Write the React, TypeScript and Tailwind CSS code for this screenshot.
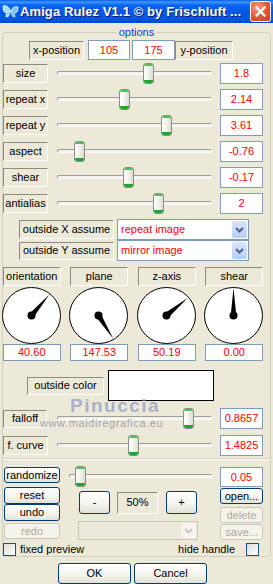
import clsx from "clsx";
import type { ReactNode } from "react";

const sunken =
  "flex shrink-0 items-center justify-center border border-t-[#8c8b83] border-l-[#8c8b83] border-b-white border-r-white";
const field =
  "flex shrink-0 items-center justify-center border border-[#7f9db9] bg-white text-[#ff0000]";
const xpButton =
  "flex shrink-0 items-center justify-center rounded-[3px] border border-[#003c74] bg-[linear-gradient(to_bottom,#ffffff,#f4f4f0_55%,#e4e1d5)] text-black";
const xpButtonOff =
  "flex shrink-0 items-center justify-center rounded-[3px] border border-[#c9c7ba] bg-[#f5f4ea] text-[#aca899]";

type SliderRow = { label: string; thumb: number; value: string };

const rows: SliderRow[] = [
  { label: "size", thumb: 93, value: "1.8" },
  { label: "repeat x", thumb: 69, value: "2.14" },
  { label: "repeat y", thumb: 111, value: "3.61" },
  { label: "aspect", thumb: 24, value: "-0.76" },
  { label: "shear", thumb: 73, value: "-0.17" },
  { label: "antialias", thumb: 103, value: "2" },
];

const dials = [
  { label: "orientation", angle: 40.6, value: "40.60" },
  { label: "plane", angle: 147.53, value: "147.53" },
  { label: "z-axis", angle: 50.19, value: "50.19" },
  { label: "shear", angle: 0, value: "0.00" },
];

function Slider({ thumb, className }: { thumb: number; className?: string }) {
  return (
    <div className={clsx("relative h-[21px] shrink-0", className)}>
      <div className="absolute top-[8px] right-[5px] left-[7px] h-[4px] rounded-[2px] border border-t-[#9d9c97] border-l-[#9d9c97] border-b-white border-r-white bg-[#f3f2ec]" />
      <div
        className="absolute top-0 h-[21px] w-[11px] overflow-hidden rounded-[3px] border border-[#8d8d86] bg-[linear-gradient(to_right,#ffffff,#f2f2ec_50%,#dcdcd2)]"
        style={{ left: thumb }}
      >
        <div className="h-[2px] bg-[#4cc25a]" />
        <div className="mt-[14px] h-[3px] bg-[#21a52f]" />
      </div>
    </div>
  );
}

function Dial({ angle }: { angle: number }) {
  const cx = 29.5;
  const cy = 28.5;
  const r = 27.5;
  const rad = (angle * Math.PI) / 180;
  const tx = cx + Math.sin(rad) * r;
  const ty = cy - Math.cos(rad) * r;
  const px = Math.cos(rad) * 2.8;
  const py = Math.sin(rad) * 2.8;
  return (
    <svg width="60" height="57" viewBox="0 0 60 57" className="block">
      <ellipse cx={cx} cy={cy} rx="29" ry="28" fill="white" stroke="black" strokeWidth="1" />
      <polygon points={`${cx + px},${cy + py} ${cx - px},${cy - py} ${tx},${ty}`} fill="black" />
      <circle cx={cx} cy={cy} r="4" fill="black" />
    </svg>
  );
}

function Select({ text, className, disabled }: { text?: string; className?: string; disabled?: boolean }) {
  return (
    <div
      className={clsx(
        "flex shrink-0 items-center border",
        disabled ? "border-[#c9c7ba] bg-[#ebeadb]" : "border-[#7f9db9] bg-white",
        className,
      )}
    >
      <span className="flex-1 pl-[3px] text-[#ff0000]">{text}</span>
      <div
        className={clsx(
          "m-[1px] flex h-[calc(100%-2px)] w-[15px] items-center justify-center rounded-[2px]",
          disabled ? "bg-[#f5f4ef]" : "bg-[linear-gradient(to_bottom,#d9e5fd,#b7cdfb)]",
        )}
      >
        <svg width="9" height="6" viewBox="0 0 9 6">
          <path d="M1 1 L4.5 4.5 L8 1" fill="none" stroke={disabled ? "#c9c7ba" : "#4d6185"} strokeWidth="2" />
        </svg>
      </div>
    </div>
  );
}

function Check() {
  return <div className="h-[13px] w-[13px] shrink-0 border border-[#1c5180] bg-[linear-gradient(135deg,#dcdcd7,#ffffff)]" />;
}

function Row({ children, className }: { children: ReactNode; className?: string }) {
  return <div className={clsx("flex", className)}>{children}</div>;
}

function AppIcon() {
  return (
    <svg width="17" height="16" viewBox="0 0 17 16" className="shrink-0">
      <path d="M1 2 C5 1 8 4 8.5 8 C6 10 3 9 1.5 7 Z" fill="#9fe0ff" stroke="#ffffff" strokeWidth="0.8" />
      <path d="M16 3 C12 2 9 5 8.5 8 C11 11 14 9 15.5 7 Z" fill="#7cc8f4" stroke="#ffffff" strokeWidth="0.8" />
      <path d="M4 9 C6 10 8 10 8.5 8 C8 12 6 14 3.5 13 Z" fill="#b9ecff" />
      <path d="M13 10 C11 11 9 10 8.5 8 C9 12 11 14 13.5 13 Z" fill="#a2dcfa" />
    </svg>
  );
}

export default function App() {
  return (
    <div className="h-[584px] w-[273px] overflow-hidden bg-[#ece9d8] font-['Liberation_Sans',Arial,sans-serif] text-[11px] leading-none font-normal text-black">
      <div className="flex h-[23px] items-center bg-[linear-gradient(to_bottom,#0a5ede_0%,#3d95ff_9%,#0a66f0_22%,#0058e6_50%,#0055e4_85%,#0046cc_100%)] pl-[2px] pr-[2px]">
        <AppIcon />
        <span className="ml-[1px] text-[13px] font-bold tracking-[0.1px] text-white [text-shadow:1px_1px_#0a1d6e]">
          Amiga Rulez V1.1 © by Frischluft ...
        </span>
        <div className="ml-auto flex h-[21px] w-[21px] items-center justify-center rounded-[3px] border border-white bg-[radial-gradient(circle_at_35%_30%,#f5a08a,#e2552f_55%,#c13b18)]">
          <svg width="11" height="11" viewBox="0 0 11 11">
            <path d="M1.5 1.5 L9.5 9.5 M9.5 1.5 L1.5 9.5" stroke="white" strokeWidth="2.2" strokeLinecap="square" />
          </svg>
        </div>
      </div>

      <div className="relative">
        <fieldset className="mx-[2px] mt-[2px] rounded-[3px] border border-[#d0d0bf] p-0">
          <legend className="mx-auto px-[2px] text-[11px] leading-[14px] text-[#0046d5]">options</legend>

          <Row className="mt-[1px] h-[20px] items-end pl-[26px]">
            <div className={clsx(sunken, "h-[19px] w-[55px]")}>x-position</div>
            <div className={clsx(field, "ml-[4px] h-[20px] w-[42px] self-start")}>105</div>
            <div className={clsx(field, "ml-[2px] h-[20px] w-[43px] self-start")}>175</div>
            <div className={clsx(sunken, "h-[19px] w-[58px]")}>y-position</div>
          </Row>

          <div className="mt-[3px] flex flex-col gap-[5px]">
            {rows.map((r) => (
              <Row key={r.label} className="h-[21px] items-center">
                <div className={clsx(sunken, "h-[19px] w-[45px]")}>{r.label}</div>
                <Slider thumb={r.thumb} className="ml-[2px] w-[167px]" />
                <div className={clsx(field, "ml-[3px] h-[21px] w-[43px]")}>{r.value}</div>
              </Row>
            ))}
          </div>

          <Row className="mt-[5px] h-[21px] items-center pl-[16px]">
            <div className={clsx(sunken, "h-[19px] w-[95px]")}>outside X assume</div>
            <Select text="repeat image" className="ml-[3px] h-[21px] w-[132px]" />
          </Row>
          <Row className="h-[21px] items-center pl-[16px]">
            <div className={clsx(sunken, "h-[18px] w-[95px]")}>outside Y assume</div>
            <Select text="mirror image" className="ml-[3px] h-[21px] w-[132px]" />
          </Row>

          <div className="-ml-[1px] mt-[6px] grid w-[262px] grid-cols-4 gap-x-[8px]">
            {dials.map((d) => (
              <div key={d.label} className="flex flex-col items-center">
                <div className={clsx(sunken, "h-[19px] w-[58px]")}>{d.label}</div>
                <div className="mt-[1px]">
                  <Dial angle={d.angle} />
                </div>
                <div className={clsx(field, "h-[17px] w-[58px]")}>{d.value}</div>
              </div>
            ))}
          </div>

          <Row className="mt-[9px] h-[31px] items-center pl-[24px]">
            <div className={clsx(sunken, "h-[18px] w-[77px]")}>outside color</div>
            <div className="ml-[4px] h-[31px] w-[106px] border border-black bg-white" />
          </Row>

          <Row className="mt-[7px] h-[21px] items-center">
            <div className={clsx(sunken, "h-[18px] w-[44px]")}>falloff</div>
            <Slider thumb={133} className="ml-[3px] w-[167px]" />
            <div className={clsx(field, "ml-[3px] h-[21px] w-[43px]")}>0.8657</div>
          </Row>
          <Row className="mt-[6px] h-[21px] items-center">
            <div className={clsx(sunken, "h-[19px] w-[45px]")}>f. curve</div>
            <Slider thumb={78} className="ml-[2px] w-[167px]" />
            <div className={clsx(field, "ml-[3px] h-[21px] w-[43px]")}>1.4825</div>
          </Row>

          <div className="mt-[2px] h-[2px] border-t border-b border-t-[#d0d0bf] border-b-white" />

          <Row className="mt-[6px] h-[21px] items-start">
            <div className={clsx(xpButton, "ml-[1px] mt-[1px] h-[16px] w-[56px]")}>randomize</div>
            <Slider thumb={13} className="ml-[2px] w-[155px]" />
            <div className={clsx(field, "ml-[3px] mt-[1px] h-[20px] w-[43px]")}>0.05</div>
          </Row>

          <Row>
            <div className="ml-[1px] flex w-[56px] flex-col">
              <div className={clsx(xpButton, "h-[17px]")}>reset</div>
              <div className={clsx(xpButton, "h-[17px]")}>undo</div>
              <div className={clsx(xpButtonOff, "mt-[2px] h-[16px]")}>redo</div>
            </div>
            <div className="ml-[18px] flex w-[120px] flex-col">
              <Row className="mt-[4px] items-center">
                <div className={clsx(xpButton, "ml-[1px] h-[23px] w-[31px]")}>-</div>
                <div className={clsx(sunken, "ml-[7px] h-[22px] w-[41px]")}>50%</div>
                <div className={clsx(xpButton, "ml-[8px] h-[23px] w-[31px]")}>+</div>
              </Row>
              <Select disabled className="mt-[7px] h-[19px] w-[120px]" />
            </div>
            <div className="ml-[22px] flex w-[43px] flex-col">
              <div className={clsx(xpButton, "mt-[1px] h-[16px]")}>open...</div>
              <div className={clsx(xpButtonOff, "mt-[3px] h-[16px]")}>delete</div>
              <div className={clsx(xpButtonOff, "mt-[1px] h-[16px]")}>save...</div>
            </div>
          </Row>

          <Row className="mt-[3px] h-[13px] items-center">
            <Check />
            <span className="ml-[4px]">fixed preview</span>
            <span className="ml-auto">hide handle</span>
            <div className="ml-[11px] mr-[11px]">
              <Check />
            </div>
          </Row>
        </fieldset>

        <Row className="mt-[6px] pl-[58px]">
          <div className={clsx(xpButton, "h-[21px] w-[73px]")}>OK</div>
          <div className={clsx(xpButton, "ml-[3px] h-[21px] w-[73px]")}>Cancel</div>
        </Row>

        <div className="pointer-events-none absolute top-[371px] left-[70px] text-[19px] font-bold tracking-[1.5px] text-[#8f96c6]/70">
          Pinuccia
        </div>
        <div className="pointer-events-none absolute top-[393px] left-[40px] text-[11px] tracking-[0.6px] text-[#7d8098]/70">
          www.maidiregrafica.eu
        </div>
      </div>
    </div>
  );
}
